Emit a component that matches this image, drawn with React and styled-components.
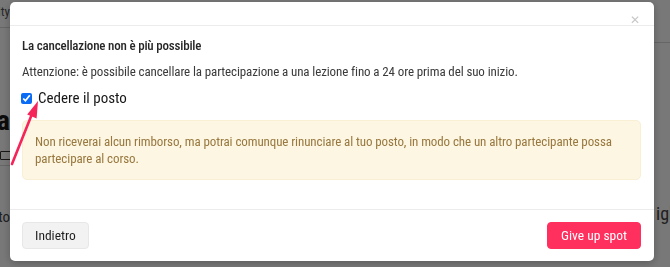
import React from "react";
import styled, { createGlobalStyle } from "styled-components";

const GlobalStyle = createGlobalStyle`
  html, body { margin: 0; padding: 0; }
  body {
    font-family: Roboto, "Liberation Sans", sans-serif;
    font-stretch: condensed;
    background: #fff;
    overflow: hidden;
  }
`;

/* ---------- background page (behind the overlay) ---------- */
const Page = styled.div`
  display: grid;
  grid-template-columns: 10px 1fr 16px;
  height: 267px;
  background: #fff;
  color: #222;
`;

const Strip = styled.div`
  display: flex;
  flex-direction: column;
  overflow: hidden;
`;

const Frag = styled.div`
  display: flex;
  align-items: ${(p) => p.$align || "center"};
  justify-content: ${(p) => (p.$end ? "flex-end" : "flex-start")};
  height: ${(p) => p.$h}px;
  flex: none;
  overflow: hidden;
  white-space: nowrap;
  font-size: ${(p) => p.$size || 13}px;
  font-weight: ${(p) => p.$weight || 400};
  color: ${(p) => p.$color || "#333"};
  border-bottom: ${(p) => (p.$line ? "1px solid #d8d8d8" : "0")};
  box-sizing: border-box;
`;

const Shifted = styled.span`
  margin-left: ${(p) => p.$shift}px;
  padding-top: ${(p) => p.$top || 0}px;
`;

const KeyIcon = styled.span`
  display: inline-block;
  width: 12px;
  height: 7px;
  margin: 0 -3px 5px 0;
  border: 1px solid #333;
  border-radius: 1px;
`;

/* ---------- overlay + modal ---------- */
const Backdrop = styled.div`
  position: fixed;
  inset: 0;
  background: rgba(0, 0, 0, 0.53);
`;

const Dialog = styled.div`
  position: fixed;
  top: 2px;
  left: 10px;
  width: 644px;
  background: #fff;
  border-radius: 5px;
  box-shadow: 0 2px 8px rgba(0, 0, 0, 0.25);
  display: flex;
  flex-direction: column;
`;

const Header = styled.div`
  display: flex;
  justify-content: flex-end;
  align-items: flex-end;
  height: 23px;
  padding: 0 14px 0 0;
  border-bottom: 1px solid #ececec;
`;

const Close = styled.button`
  border: 0;
  background: none;
  padding: 0;
  margin-bottom: -1px;
  color: #c8c8c8;
  font-family: "DejaVu Sans", sans-serif;
  font-size: 12px;
  line-height: 11px;
  height: 11px;
  cursor: pointer;
`;

const Body = styled.div`
  display: flex;
  flex-direction: column;
  padding: 10px 13px 29px 12px;
`;

const Title = styled.div`
  font-size: 13px;
  font-weight: 500;
  line-height: 20px;
  color: #262626;
  letter-spacing: -0.2px;
`;

const Text = styled.div`
  margin-top: 6px;
  font-size: 13px;
  line-height: 20px;
  color: #3a3a3a;
  letter-spacing: -0.12px;
`;

const CheckRow = styled.label`
  margin-top: 6px;
  display: flex;
  align-items: center;
  gap: 6px;
  height: 20px;
  font-size: 15px;
  color: #161616;
`;

const Check = styled.input`
  margin: 0 0 0 -1px;
  width: 11px;
  height: 11px;
  accent-color: #0a6cf5;
`;

const Note = styled.div`
  margin-top: 12px;
  padding: 12px 12px;
  background: #fdf6e2;
  border: 1px solid #f8efd4;
  border-radius: 5px;
  font-size: 13px;
  line-height: 17px;
  letter-spacing: -0.1px;
  color: #98783f;
`;

const Footer = styled.div`
  display: flex;
  justify-content: space-between;
  align-items: center;
  padding: 12px 13px 12px 12px;
  border-top: 1px solid #ececec;
`;

const Button = styled.button`
  height: 27px;
  padding: 0 ${(p) => (p.$primary ? 13 : 12)}px;
  border-radius: 4px;
  border: 1px solid ${(p) => (p.$primary ? "#ff2f5e" : "#e7e7e7")};
  background: ${(p) => (p.$primary ? "#ff2f5e" : "#f2f2f2")};
  color: ${(p) => (p.$primary ? "#fff" : "#1e1e1e")};
  font-family: inherit;
  font-stretch: condensed;
  font-size: 13.5px;
  line-height: 1;
  cursor: pointer;
`;

const Annotation = styled.svg`
  position: fixed;
  left: 0;
  top: 0;
  pointer-events: none;
`;

export default function App() {
  return (
    <>
      <GlobalStyle />
      <Page>
        <Strip>
          <Frag $h={28} $end $line $align="flex-start" $color="#555">
            <Shifted $shift={0} $top={4}>Community</Shifted>
          </Frag>
          <Frag $h={76} />
          <Frag $h={32} $end $size={28} $weight={700} $color="#1a1a1a">
            Scuola
          </Frag>
          <Frag $h={30} $end $line $align="flex-end">
            <KeyIcon />
          </Frag>
          <Frag $h={40} />
          <Frag $h={22} $end $size={15} $color="#444">
            Pagamento
          </Frag>
        </Strip>
        <div />
        <Strip>
          <Frag $h={43} $line />
          <Frag $h={159} />
          <Frag $h={22} $size={18} $color="#444">
            <Shifted $shift={2}>igliati</Shifted>
          </Frag>
        </Strip>
      </Page>
      <Backdrop />
      <Dialog role="dialog">
        <Header>
          <Close aria-label="Chiudi">✕</Close>
        </Header>
        <Body>
          <Title>La cancellazione non è più possibile</Title>
          <Text>
            Attenzione: è possibile cancellare la partecipazione a una lezione fino a 24 ore prima del suo inizio.
          </Text>
          <CheckRow>
            <Check type="checkbox" defaultChecked />
            Cedere il posto
          </CheckRow>
          <Note>
            Non riceverai alcun rimborso, ma potrai comunque rinunciare al tuo posto, in modo che un altro
            partecipante possa partecipare al corso.
          </Note>
        </Body>
        <Footer>
          <Button>Indietro</Button>
          <Button $primary>Give up spot</Button>
        </Footer>
      </Dialog>
      <Annotation width="60" height="180" viewBox="0 0 60 180">
        <line x1="12" y1="164" x2="32" y2="114" stroke="#f5245a" strokeWidth="2.6" strokeLinecap="round" />
        <polygon points="38,101 36.6,118.4 27.2,114.4" fill="#f5245a" />
      </Annotation>
    </>
  );
}
